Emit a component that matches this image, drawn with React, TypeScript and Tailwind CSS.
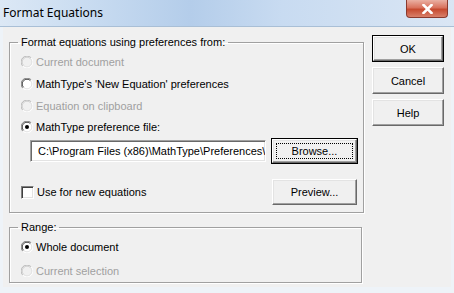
import { ReactElement, ReactNode } from 'react'
import clsx from 'clsx'

const Radio = ({ checked, disabled }: { checked?: boolean; disabled?: boolean }) => (
  <svg width="12" height="12" viewBox="0 0 12 12" className="shrink-0">
    <circle cx="6" cy="6" r="5.5" fill={disabled ? '#f0f0f0' : '#ffffff'} />
    <path d="M1.8 10.2 A5.5 5.5 0 0 1 10.2 1.8" fill="none" stroke={disabled ? '#b8b8b8' : '#808080'} strokeWidth="1" />
    <path d="M2.6 9.4 A4.5 4.5 0 0 1 9.4 2.6" fill="none" stroke={disabled ? '#d0d0d0' : '#404040'} strokeWidth="1" />
    <path d="M10.2 1.8 A5.5 5.5 0 0 1 1.8 10.2" fill="none" stroke="#ffffff" strokeWidth="1" />
    <path d="M9.4 2.6 A4.5 4.5 0 0 1 2.6 9.4" fill="none" stroke="#e3e3e3" strokeWidth="1" />
    {checked && <circle cx="6" cy="6" r="2" fill="#000000" />}
  </svg>
)

const Option = ({
  label,
  checked,
  disabled,
  className,
}: {
  label: string
  checked?: boolean
  disabled?: boolean
  className?: string
}) => (
  <div className={clsx('flex items-center gap-[3px] pl-[11px]', className)}>
    <Radio checked={checked} disabled={disabled} />
    <span className={disabled ? 'text-[#a0a0a0]' : 'text-black'}>{label}</span>
  </div>
)

const Button = ({
  children,
  primary,
  focused,
  className,
}: {
  children: ReactNode
  primary?: boolean
  focused?: boolean
  className?: string
}) => (
  <div
    className={clsx(
      'flex items-center justify-center',
      primary ? 'border border-black' : '',
      className,
    )}
  >
    <div className="flex h-full w-full items-center justify-center border border-t-white border-l-white border-r-[#696969] border-b-[#696969] shadow-[inset_-1px_-1px_0_#a0a0a0,inset_1px_1px_0_#e3e3e3]">
      <div
        className={clsx(
          'flex h-[calc(100%-6px)] w-[calc(100%-6px)] items-center justify-center',
          focused && 'border border-dotted border-black',
        )}
      >
        {children}
      </div>
    </div>
  </div>
)

export default function App(): ReactElement {
  return (
    <div className="flex h-[293px] w-[454px] flex-col overflow-hidden bg-[#eef3f8] font-['Liberation_Sans',sans-serif] text-[11px] leading-[14px]">
      {/* title bar */}
      <div className="relative flex h-[27px] shrink-0 items-start border-b border-[#a9bfd6] bg-[linear-gradient(90deg,#dce8f5_0%,#c6daf0_22%,#b4cdea_42%,#c8dbf1_62%,#dae6f4_100%)]">
        <span className="pl-[3px] pt-[4px] font-['Noto_Sans',sans-serif] text-[12px] leading-[17px] text-black">
          Format Equations
        </span>
        <div className="absolute right-[6px] top-0 flex h-[18px] w-[42px] items-center justify-center rounded-b-[4px] border border-t-0 border-[#8a3a2e] bg-[linear-gradient(180deg,#eab0a3_0%,#d9725d_45%,#c64a30_55%,#d9806a_100%)]">
          <svg width="11" height="10" viewBox="0 0 11 10">
            <path d="M1.5 1 L9.5 9 M9.5 1 L1.5 9" stroke="#ffffff" strokeWidth="2.6" strokeLinecap="square" />
          </svg>
        </div>
      </div>

      {/* dialog body */}
      <div className="mx-[3px] flex h-[260px] shrink-0 gap-[8px] bg-[#f0f0f0] pl-[6px]">
        <div className="flex w-[355px] flex-col">
          <fieldset className="mt-[8px] border border-[#a0a0a0] pb-[7px] shadow-[1px_1px_0_#ffffff,inset_1px_1px_0_#ffffff]">
            <legend className="ml-[8px] px-[3px]">Format equations using preferences from:</legend>
            <div className="flex flex-col pt-[2px]">
              <Option className="h-[22px]" label="Current document" disabled />
              <Option className="h-[22px]" label="MathType's 'New Equation' preferences" />
              <Option className="h-[21px]" label="Equation on clipboard" disabled />
              <Option className="h-[22px]" label="MathType preference file:" checked />
              <div className="flex h-[26px] items-center gap-[5px] pl-[20px]">
                <div className="flex h-[22px] w-[236px] items-center overflow-hidden whitespace-nowrap border border-t-[#a0a0a0] border-l-[#a0a0a0] border-r-white border-b-white bg-white pl-[7px] shadow-[inset_1px_1px_0_#696969,inset_-1px_-1px_0_#e3e3e3]">
                  C:\Program Files (x86)\MathType\Preferences\
                </div>
                <Button primary focused className="h-[26px] w-[87px]">
                  Browse...
                </Button>
              </div>
              <div className="mt-[15px] flex h-[26px] items-center justify-between pr-[6px]">
                <div className="flex items-center gap-[3px] pl-[11px]">
                  <div className="h-[13px] w-[13px] border border-t-[#808080] border-l-[#808080] border-r-white border-b-white bg-white shadow-[inset_1px_1px_0_#404040,inset_-1px_-1px_0_#e3e3e3]" />
                  <span>Use for new equations</span>
                </div>
                <Button className="h-[26px] w-[85px]">Preview...</Button>
              </div>
            </div>
          </fieldset>

          <fieldset className="mt-[7px] mr-[2px] border border-[#a0a0a0] shadow-[1px_1px_0_#ffffff,inset_1px_1px_0_#ffffff]">
            <legend className="ml-[8px] px-[3px]">Range:</legend>
            <div className="flex flex-col gap-[2px] pt-[2px]">
              <Option className="h-[22px]" label="Whole document" checked />
              <Option className="h-[22px]" label="Current selection" disabled />
            </div>
          </fieldset>
        </div>

        <div className="mt-[8px] flex flex-col gap-[5px]">
          <Button primary className="h-[27px] w-[72px]">
            OK
          </Button>
          <Button className="h-[27px] w-[72px]">Cancel</Button>
          <Button className="h-[27px] w-[72px]">Help</Button>
        </div>
      </div>
    </div>
  )
}
